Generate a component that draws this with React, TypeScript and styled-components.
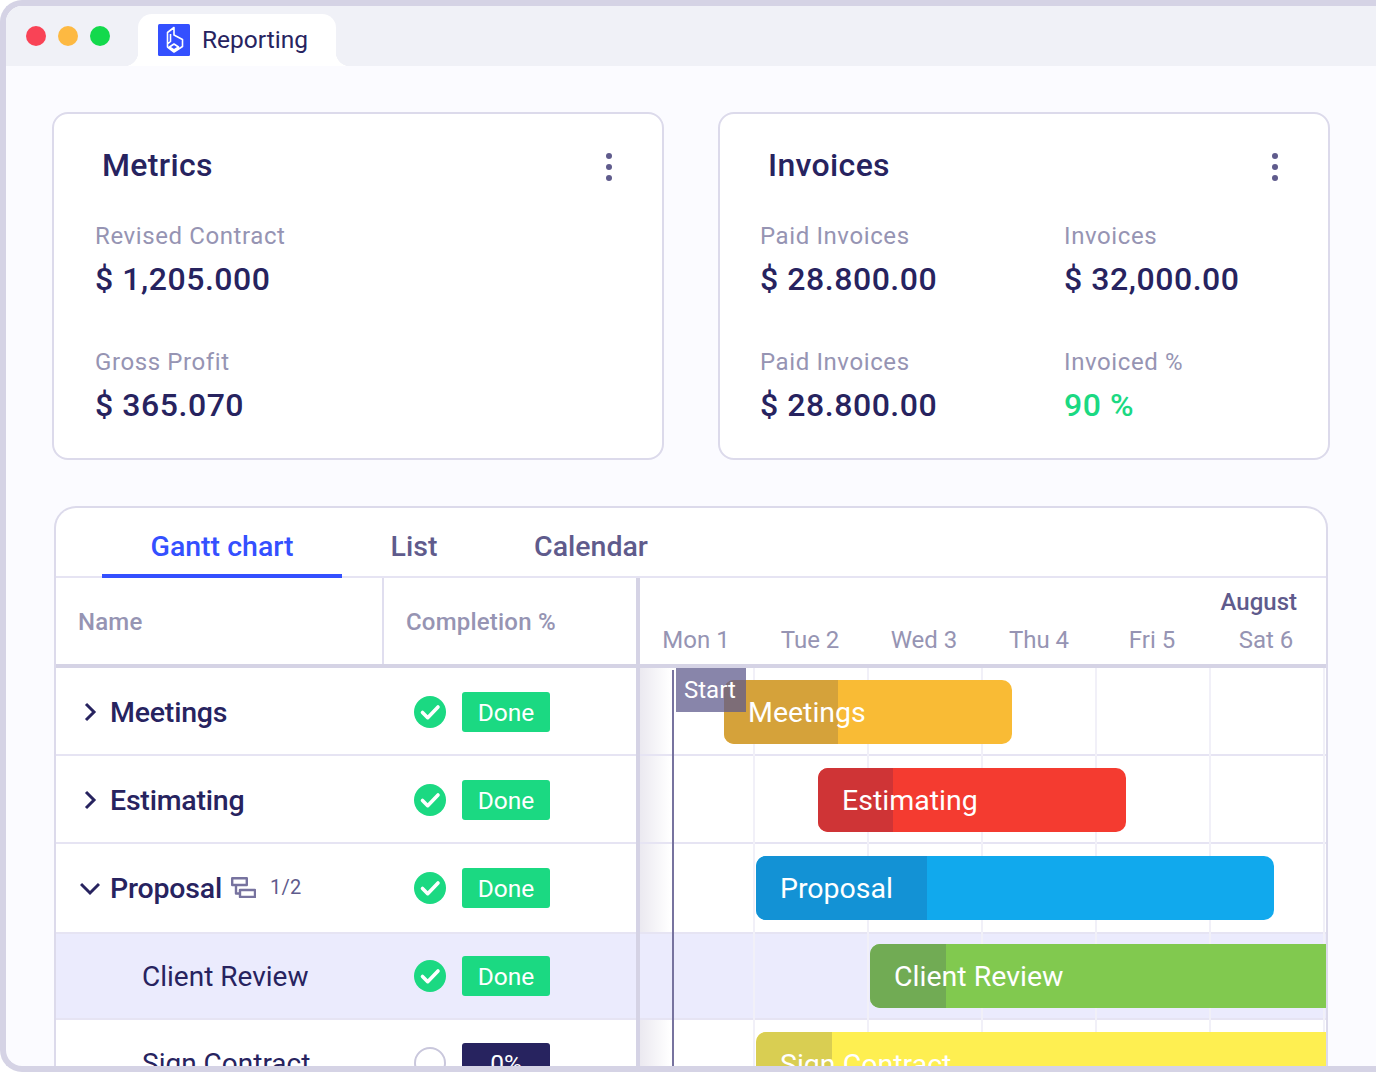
import React from "react"
import styled, { createGlobalStyle } from "styled-components"

const GlobalStyle = createGlobalStyle`
  html, body {
    margin: 0;
    height: 100%;
    background: #ffffff;
    overflow: hidden;
  }
  * {
    box-sizing: border-box;
  }
  body {
    font-family: Roboto, "Liberation Sans", sans-serif;
    color: #27235f;
  }
`

const Frame = styled.div`
  width: 1376px;
  height: 1072px;
  background: #fbfbff;
  border: 6px solid #d5d3e5;
  border-right: 0;
  border-radius: 22px 0 0 22px;
  overflow: hidden;
  display: flex;
  flex-direction: column;
`

const TitleBar = styled.div`
  height: 60px;
  flex: none;
  background: #f0f1f7;
  display: flex;
  padding-left: 20px;
  align-items: flex-end;
`

const Dots = styled.div`
  display: flex;
  gap: 12px;
  align-self: flex-start;
  margin-top: 20px;
  margin-right: 28px;
`

const Dot = styled.span<{ $color: string }>`
  width: 20px;
  height: 20px;
  border-radius: 50%;
  background: ${(p) => p.$color};
`

const BrowserTab = styled.div`
  position: relative;
  width: 198px;
  height: 52px;
  background: #ffffff;
  border-radius: 14px 14px 0 0;
  display: flex;
  align-items: center;
  padding: 0 0 0 20px;
  gap: 12px;
  font-size: 24.5px;
  color: #27235f;
  &::before,
  &::after {
    content: "";
    position: absolute;
    bottom: 0;
    width: 14px;
    height: 14px;
    background: radial-gradient(circle at var(--c) 0, #f0f1f7 14px, #ffffff 14.5px);
  }
  &::before {
    left: -14px;
    --c: 0;
  }
  &::after {
    right: -14px;
    --c: 100%;
  }
`

const TabLabel = styled.span`
  margin-bottom: 2px;
`

const Body = styled.div`
  flex: 1;
  min-height: 0;
  padding: 46px 0 0 46px;
  display: flex;
  flex-direction: column;
  gap: 46px;
`

const Cards = styled.div`
  display: flex;
  gap: 54px;
`

const Card = styled.section<{ $inset: number }>`
  position: relative;
  flex: none;
  width: 612px;
  height: 348px;
  background: #ffffff;
  border: 2px solid #dcdaeb;
  border-radius: 16px;
  padding: 32px 40px 0 ${(p) => p.$inset}px;
`

const CardTitle = styled.h2<{ $indent: number }>`
  margin: 0 0 0 ${(p) => p.$indent}px;
  font-size: 32px;
  line-height: 38px;
  letter-spacing: 0.35px;
  font-weight: 500;
  color: #27235f;
`

const Kebab = styled.div`
  position: absolute;
  top: 39px;
  right: 50px;
  display: flex;
  flex-direction: column;
  gap: 5px;
  span {
    width: 6px;
    height: 6px;
    border-radius: 50%;
    background: #5f5b8c;
  }
`

const StatGrid = styled.div`
  display: grid;
  grid-template-columns: 304px 1fr;
  row-gap: 38px;
  margin-top: 38px;
`

const Stat = styled.div<{ $wide?: boolean }>`
  height: 88px;
  grid-column: ${(p) => (p.$wide ? "1 / -1" : "auto")};
`

const StatLabel = styled.div`
  font-size: 24px;
  line-height: 28px;
  letter-spacing: 0.6px;
  color: #9694b3;
`

const StatValue = styled.div<{ $green?: boolean }>`
  margin-top: 10px;
  font-size: 32px;
  line-height: 38px;
  letter-spacing: 0.55px;
  font-weight: 500;
  color: ${(p) => (p.$green ? "#1bd982" : "#27235f")};
`

const Board = styled.section`
  flex: none;
  width: 1274px;
  margin-left: 2px;
  height: 570px;
  background: #ffffff;
  border: 2px solid #dcdaeb;
  border-bottom: 0;
  border-radius: 22px 22px 0 0;
  overflow: hidden;
  display: flex;
  flex-direction: column;
`

const TabBar = styled.div`
  height: 70px;
  flex: none;
  display: flex;
  padding-left: 46px;
  border-bottom: 2px solid #e6e4f3;
`

const TabItem = styled.div<{ $active?: boolean; $width: number }>`
  width: ${(p) => p.$width}px;
  height: 70px;
  padding-top: 21px;
  text-align: center;
  font-size: 28.5px;
  line-height: 36px;
  font-weight: 500;
  color: ${(p) => (p.$active ? "#3450ff" : "#5f5b8c")};
  border-bottom: ${(p) => (p.$active ? "4px solid #3450ff" : "0")};
`

const Split = styled.div`
  flex: 1;
  min-height: 0;
  display: flex;
`

const LeftPane = styled.div`
  width: 584px;
  flex: none;
  border-right: 4px solid #d5d3e5;
  display: flex;
  flex-direction: column;
`

const HeadRow = styled.div`
  height: 90px;
  flex: none;
  display: flex;
  border-bottom: 4px solid #d5d3e5;
`

const HeadCell = styled.div<{ $width?: number }>`
  width: ${(p) => (p.$width ? `${p.$width}px` : "auto")};
  flex: ${(p) => (p.$width ? "none" : 1)};
  padding: 2px 0 0 22px;
  border-right: ${(p) => (p.$width ? "2px solid #e0deef" : "0")};
  display: flex;
  align-items: center;
  font-size: 24px;
  letter-spacing: 0.2px;
  font-weight: 500;
  color: #9694b3;
`

const Row = styled.div<{ $selected?: boolean; $height: number; $nudge?: boolean }>`
  height: ${(p) => p.$height}px;
  flex: none;
  display: flex;
  align-items: center;
  padding-top: ${(p) => (p.$nudge ? "2px" : "0")};
  background: ${(p) => (p.$selected ? "#ebebfd" : "transparent")};
  border-bottom: 2px solid #e6e4f3;
`

const NameCell = styled.div`
  width: 350px;
  flex: none;
  display: flex;
  align-items: center;
  padding-left: 24px;
`

const Chevron = styled.svg`
  width: 20px;
  height: 20px;
  flex: none;
  margin-right: 10px;
`

const RowName = styled.span<{ $child?: boolean }>`
  font-size: ${(p) => (p.$child ? "28px" : "28.5px")};
  letter-spacing: ${(p) => (p.$child ? "0" : "-0.2px")};
  font-weight: ${(p) => (p.$child ? 400 : 500)};
  margin-left: ${(p) => (p.$child ? "62px" : "0")};
  margin-top: 2px;
  color: #27235f;
  line-height: 36px;
  white-space: nowrap;
`

const SubCount = styled.span`
  margin-left: 14px;
  font-size: 20px;
  letter-spacing: 0.3px;
  color: #5f5b8c;
  margin-bottom: 2px;
  white-space: nowrap;
`

const SubIcon = styled.svg`
  margin-left: 9px;
  margin-bottom: 1px;
  width: 25px;
  height: 21px;
  flex: none;
`

const StatusCell = styled.div`
  display: flex;
  align-items: center;
  gap: 16px;
  margin-left: 8px;
`

const CheckIcon = styled.svg`
  width: 32px;
  height: 32px;
  flex: none;
`

const Pill = styled.span<{ $todo?: boolean }>`
  width: 88px;
  height: 40px;
  border-radius: 3px;
  background: ${(p) => (p.$todo ? "#27235f" : "#1bd982")};
  color: #ffffff;
  font-size: 24.5px;
  display: flex;
  align-items: center;
  justify-content: center;
`

const Chart = styled.div`
  position: relative;
  flex: 1;
  min-width: 0;
  overflow: hidden;
`

const Months = styled.div`
  height: 90px;
  border-bottom: 4px solid #d5d3e5;
  display: flex;
  flex-direction: column;
  padding-top: 9px;
`

const Month = styled.div`
  text-align: right;
  padding-right: 29px;
  font-size: 24px;
  line-height: 30px;
  font-weight: 500;
  color: #5f5b8c;
`

const Days = styled.div`
  display: flex;
  margin-top: 9px;
`

const Day = styled.span<{ $width: number }>`
  width: ${(p) => p.$width}px;
  flex: none;
  text-align: center;
  font-size: 24px;
  line-height: 29px;
  color: #9694b3;
`

const ChartRow = styled.div<{ $selected?: boolean; $height: number }>`
  height: ${(p) => p.$height}px;
  background: ${(p) =>
    p.$selected
      ? "#ebebfd"
      : "linear-gradient(to right, #ebe9f0, rgba(255, 255, 255, 0) 30px)"};
  border-bottom: 2px solid #e6e4f3;
`

/* canvas pieces: their place on the timeline is the content */
const GridLine = styled.span<{ $left: number }>`
  position: absolute;
  top: 90px;
  bottom: 0;
  left: ${(p) => p.$left}px;
  width: 2px;
  background: #f1f0f8;
`

const TodayLine = styled.span`
  position: absolute;
  top: 92px;
  bottom: 0;
  left: 32px;
  width: 2px;
  background: #77739f;
  z-index: 2;
`

const StartFlag = styled.span`
  position: absolute;
  top: 90px;
  left: 36px;
  width: 70px;
  height: 44px;
  background: rgba(95, 91, 140, 0.74);
  color: #ffffff;
  font-size: 24px;
  line-height: 44px;
  padding-left: 8px;
  z-index: 3;
`

const Bar = styled.div<{ $left: number; $width: number; $top: number; $color: string; $open?: boolean }>`
  position: absolute;
  top: ${(p) => p.$top}px;
  left: ${(p) => p.$left}px;
  width: ${(p) => p.$width}px;
  height: 64px;
  background: ${(p) => p.$color};
  border-radius: ${(p) => (p.$open ? "10px 0 0 10px" : "10px")};
  overflow: hidden;
  z-index: 1;
`

const BarDone = styled.span<{ $width: number; $color: string }>`
  display: block;
  height: 100%;
  width: ${(p) => p.$width}px;
  background: ${(p) => p.$color};
`

const BarLabel = styled.span<{ $left: number; $top: number }>`
  position: absolute;
  top: ${(p) => p.$top}px;
  left: ${(p) => p.$left}px;
  font-size: 28.5px;
  line-height: 66px;
  color: #ffffff;
  white-space: nowrap;
  z-index: 4;
`

const Check = () => (
  <CheckIcon viewBox="0 0 32 32">
    <circle cx="16" cy="16" r="16" fill="#1bd982" />
    <path d="M8.5 16.5l5.2 5.2L24 11" fill="none" stroke="#fff" strokeWidth="3.6" strokeLinecap="round" strokeLinejoin="round" />
  </CheckIcon>
)

const Open = () => (
  <CheckIcon viewBox="0 0 32 32">
    <circle cx="16" cy="16" r="15" fill="#fff" stroke="#c9c7dc" strokeWidth="2" />
  </CheckIcon>
)

const stats = {
  metrics: [
    { label: "Revised Contract", value: "$ 1,205.000" },
    { label: "Gross Profit", value: "$ 365.070" },
  ],
  invoices: [
    { label: "Paid Invoices", value: "$ 28.800.00" },
    { label: "Invoices", value: "$ 32,000.00" },
    { label: "Paid Invoices", value: "$ 28.800.00" },
    { label: "Invoiced %", value: "90 %", green: true },
  ],
}

const rows = [
  { name: "Meetings", height: 88, chevron: "right", nudge: true },
  { name: "Estimating", height: 88, chevron: "right", nudge: true },
  { name: "Proposal", height: 90, chevron: "down", sub: "1/2" },
  { name: "Client Review", height: 86, child: true, selected: true },
  { name: "Sign Contract", height: 88, child: true, todo: true },
]

const bars = [
  { name: "Meetings", left: 84, width: 288, top: 102, done: 114, color: "#f9bb35", shade: "#d5a23a", labelLeft: 108 },
  { name: "Estimating", left: 178, width: 308, top: 190, done: 75, color: "#f43b30", shade: "#cf3436", labelLeft: 202 },
  { name: "Proposal", left: 116, width: 518, top: 278, done: 171, color: "#11a9ed", shade: "#1392d5", labelLeft: 140 },
  { name: "Client Review", left: 230, width: 470, top: 366, done: 76, color: "#81c94f", shade: "#71ab54", labelLeft: 254, open: true },
  { name: "Sign Contract", left: 116, width: 600, top: 454, done: 76, color: "#feef51", shade: "#d9ce52", labelLeft: 140, open: true },
]

const days = [
  { name: "Mon 1", width: 112 },
  { name: "Tue 2", width: 116 },
  { name: "Wed 3", width: 112 },
  { name: "Thu 4", width: 118 },
  { name: "Fri 5", width: 108 },
  { name: "Sat 6", width: 120 },
]

const App = () => {
  return (
    <>
      <GlobalStyle />
      <Frame>
        <TitleBar>
          <Dots>
            <Dot $color="#f94356" />
            <Dot $color="#fdb942" />
            <Dot $color="#13d94c" />
          </Dots>
          <BrowserTab>
            <svg width="32" height="32" viewBox="0 0 32 32">
              <rect width="32" height="32" rx="1.5" fill="#3450ff" />
              <path
                d="M16 3.5L9.5 8.5V23l6.5 5 8.5-5.5v-7L16 11zM9.5 20l3-2.5V10M11.5 23l4.5-3 4.5 3-4.5 3z"
                fill="none"
                stroke="#fff"
                strokeWidth="1.6"
                strokeLinejoin="round"
              />
            </svg>
            <TabLabel>Reporting</TabLabel>
          </BrowserTab>
        </TitleBar>
        <Body>
          <Cards>
            <Card $inset={41}>
              <CardTitle $indent={7}>Metrics</CardTitle>
              <Kebab>
                <span />
                <span />
                <span />
              </Kebab>
              <StatGrid>
                {stats.metrics.map((s) => (
                  <Stat key={s.label} $wide>
                    <StatLabel>{s.label}</StatLabel>
                    <StatValue>{s.value}</StatValue>
                  </Stat>
                ))}
              </StatGrid>
            </Card>
            <Card $inset={40}>
              <CardTitle $indent={8}>Invoices</CardTitle>
              <Kebab>
                <span />
                <span />
                <span />
              </Kebab>
              <StatGrid>
                {stats.invoices.map((s, i) => (
                  <Stat key={i}>
                    <StatLabel>{s.label}</StatLabel>
                    <StatValue $green={s.green}>{s.value}</StatValue>
                  </Stat>
                ))}
              </StatGrid>
            </Card>
          </Cards>
          <Board>
            <TabBar>
              <TabItem $active $width={240}>Gantt chart</TabItem>
              <TabItem $width={144}>List</TabItem>
              <TabItem $width={210}>Calendar</TabItem>
            </TabBar>
            <Split>
              <LeftPane>
                <HeadRow>
                  <HeadCell $width={328}>Name</HeadCell>
                  <HeadCell>Completion %</HeadCell>
                </HeadRow>
                {rows.map((r) => (
                  <Row key={r.name} $height={r.height} $selected={r.selected} $nudge={r.nudge}>
                    <NameCell>
                      {r.chevron && (
                        <Chevron viewBox="0 0 20 20">
                          <path
                            d={r.chevron === "right" ? "M6 2l8 8-8 8" : "M1 6l9 9 9-9"}
                            fill="none"
                            stroke="#27235f"
                            strokeWidth="3"
                          />
                        </Chevron>
                      )}
                      <RowName $child={r.child}>{r.name}</RowName>
                      {r.sub && (
                        <>
                          <SubIcon viewBox="0 0 25 21">
                            <path
                              d="M1.2 1.2h14.6v6.8H1.2zM5 8v8.5h4M9 13h15v7H9z"
                              fill="none"
                              stroke="#77739f"
                              strokeWidth="2.4"
                              strokeLinejoin="round"
                            />
                          </SubIcon>
                          <SubCount>{r.sub}</SubCount>
                        </>
                      )}
                    </NameCell>
                    <StatusCell>
                      {r.todo ? <Open /> : <Check />}
                      <Pill $todo={r.todo}>{r.todo ? "0%" : "Done"}</Pill>
                    </StatusCell>
                  </Row>
                ))}
              </LeftPane>
              <Chart>
                <Months>
                  <Month>August</Month>
                  <Days>
                    {days.map((d) => (
                      <Day key={d.name} $width={d.width}>{d.name}</Day>
                    ))}
                  </Days>
                </Months>
                {rows.map((r) => (
                  <ChartRow key={r.name} $height={r.height} $selected={r.selected} />
                ))}
                {[113, 227, 341, 455, 569, 683].map((x) => (
                  <GridLine key={x} $left={x} />
                ))}
                <TodayLine />
                <StartFlag>Start</StartFlag>
                {bars.map((b) => (
                  <React.Fragment key={b.name}>
                    <Bar $left={b.left} $width={b.width} $top={b.top} $color={b.color} $open={b.open}>
                      <BarDone $width={b.done} $color={b.shade} />
                    </Bar>
                    <BarLabel $left={b.labelLeft} $top={b.top}>{b.name}</BarLabel>
                  </React.Fragment>
                ))}
              </Chart>
            </Split>
          </Board>
        </Body>
      </Frame>
    </>
  )
}

export default App
